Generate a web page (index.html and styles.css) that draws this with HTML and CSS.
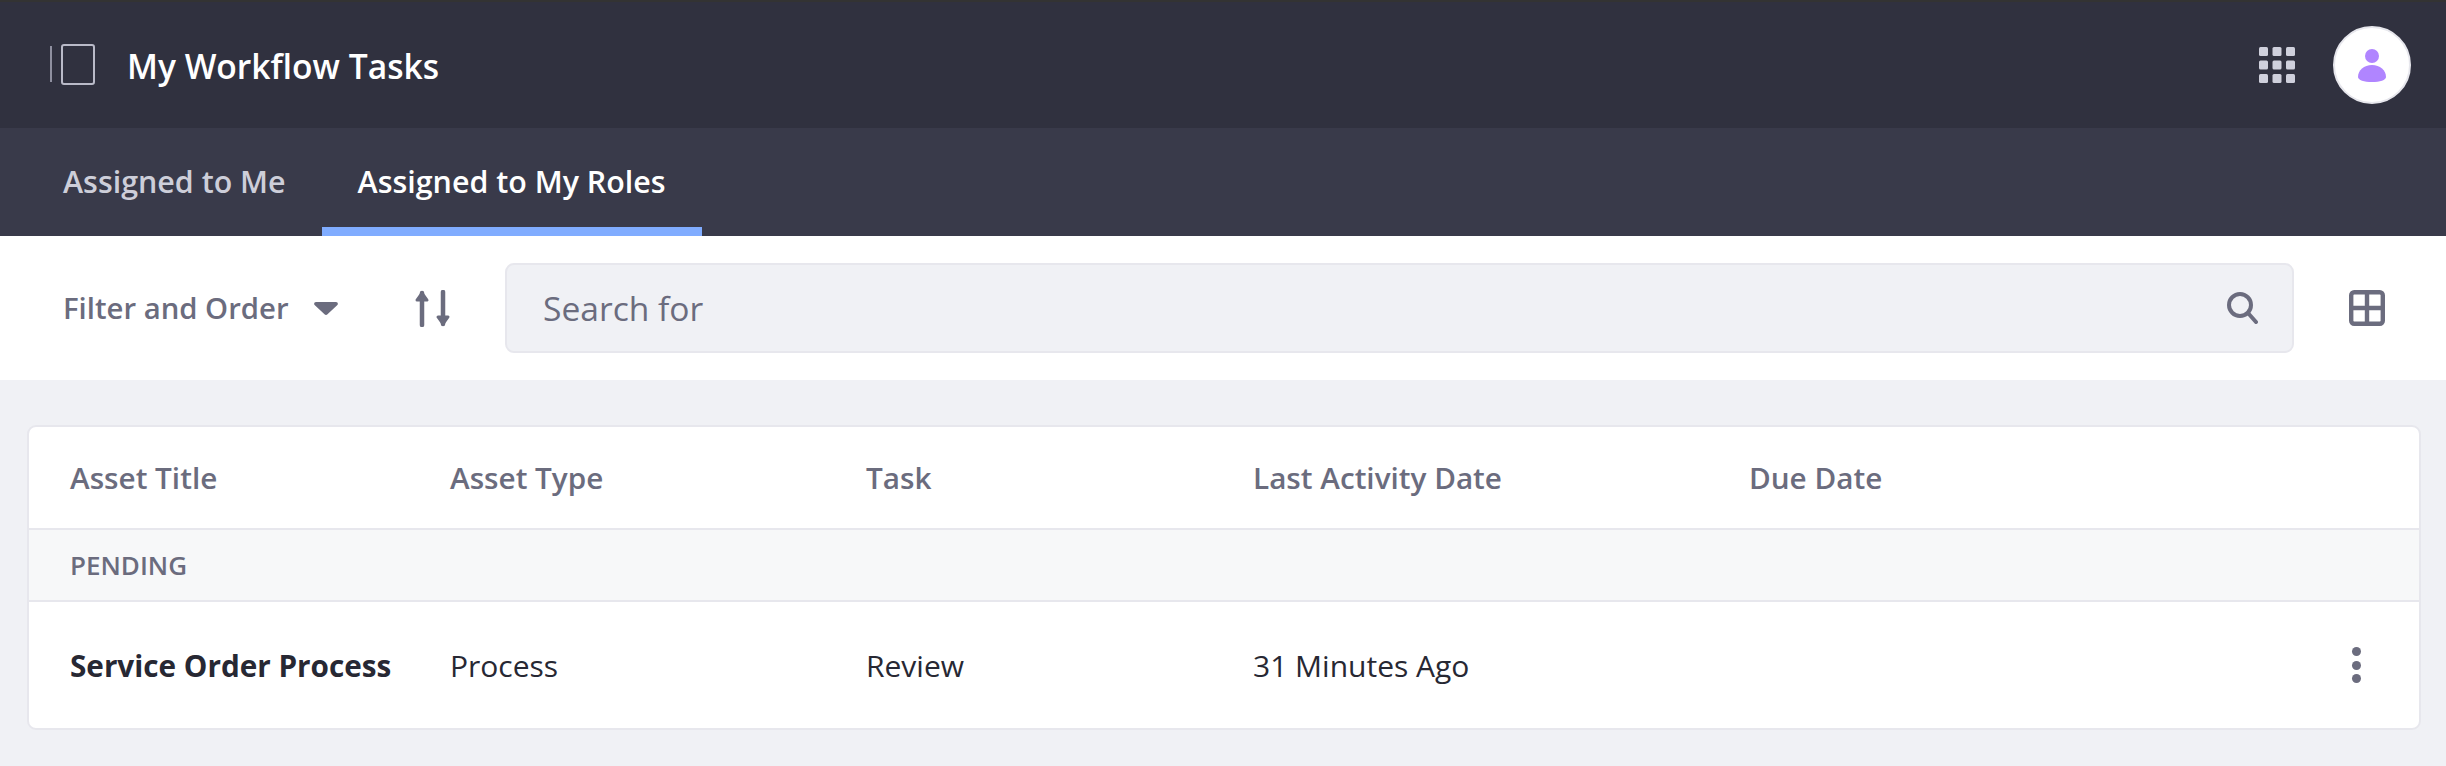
FILE: index.html
```html
<!DOCTYPE html>
<html lang="en">
<head>
    <meta charset="UTF-8">
    <meta name="viewport" content="width=device-width, initial-scale=1.0">
    <title>My Workflow Tasks</title>
    <link rel="stylesheet" href="styles.css">
</head>
<body>
    <header class="topbar">
        <svg class="sidebar-icon" width="46" height="42" viewBox="0 0 46 42">
            <path d="M1 2V38" stroke="#8f90a0" stroke-width="2" fill="none"/>
            <rect x="12" y="1" width="32" height="39" rx="2" stroke="#b9bac8" stroke-width="2" fill="none"/>
        </svg>
        <h1 class="page-title">My Workflow Tasks</h1>
        <svg class="apps-icon" width="36" height="36" viewBox="0 0 36 36" fill="#cfd0dc">
            <rect x="0" y="0" width="9" height="9" rx="1.5"/>
            <rect x="13.5" y="0" width="9" height="9" rx="1.5"/>
            <rect x="27" y="0" width="9" height="9" rx="1.5"/>
            <rect x="0" y="13.5" width="9" height="9" rx="1.5"/>
            <rect x="13.5" y="13.5" width="9" height="9" rx="1.5"/>
            <rect x="27" y="13.5" width="9" height="9" rx="1.5"/>
            <rect x="0" y="27" width="9" height="9" rx="1.5"/>
            <rect x="13.5" y="27" width="9" height="9" rx="1.5"/>
            <rect x="27" y="27" width="9" height="9" rx="1.5"/>
        </svg>
        <div class="avatar">
            <svg width="28" height="33" viewBox="0 0 28 33" fill="#b085ff">
                <circle cx="14" cy="7" r="7"/>
                <path d="M14 16C6 16 0 21 0 28C0 31 6 33 14 33C22 33 28 31 28 28C28 21 22 16 14 16Z"/>
            </svg>
        </div>
    </header>

    <nav class="tabs">
        <a class="tab">Assigned to Me</a>
        <a class="tab active">Assigned to My Roles</a>
    </nav>

    <div class="toolbar">
        <div class="filter">
            <span>Filter and Order</span>
            <svg width="24" height="13" viewBox="0 0 24 13" fill="#6b6c7e">
                <path d="M2 0H22C23.6 0 24.4 1.6 23.4 3L13.5 12.3C12.7 13.2 11.3 13.2 10.5 12.3L.6 3C-.4 1.6.4 0 2 0Z"/>
            </svg>
        </div>
        <svg class="sort-icon" width="37" height="37" viewBox="0 0 37 37" fill="#6b6c7e" stroke="#6b6c7e" stroke-linecap="round" stroke-linejoin="round">
            <path d="M8 35V3" stroke-width="4.5"/>
            <path d="M3 10L8 3L13 10Z" stroke-width="3"/>
            <path d="M29 2V34" stroke-width="4.5"/>
            <path d="M24 27L29 34L34 27Z" stroke-width="3"/>
        </svg>
        <div class="search">
            <span class="search-text">Search for</span>
            <svg width="31" height="32" viewBox="0 0 31 32" fill="none" stroke="#6b6c7e" stroke-width="4" stroke-linecap="round">
                <circle cx="13" cy="13" r="11"/>
                <path d="M21 21L29 30"/>
            </svg>
        </div>
        <svg class="table-icon" width="36" height="36" viewBox="0 0 36 36" fill="none" stroke="#6b6c7e" stroke-width="4.4">
            <rect x="2.2" y="2.2" width="31.6" height="31.6" rx="3"/>
            <path d="M18 2V34M2 18H34"/>
        </svg>
    </div>

    <main class="content">
        <div class="card">
            <div class="row head-row">
                <div>Asset Title</div>
                <div>Asset Type</div>
                <div>Task</div>
                <div>Last Activity Date</div>
                <div>Due Date</div>
            </div>
            <div class="group-row">PENDING</div>
            <div class="row task-row">
                <div class="task-title">Service Order Process</div>
                <div>Process</div>
                <div>Review</div>
                <div>31 Minutes Ago</div>
                <div></div>
                <div class="kebab"><span></span><span></span><span></span></div>
            </div>
        </div>
    </main>
</body>
</html>
```

FILE: styles.css
```css
* {
    box-sizing: border-box;
}

html, body {
    height: 100%;
}

body {
    margin: 0;
    background-color: #f0f1f5;
    font-family: "Open Sans", "Noto Sans", Arial, sans-serif;
    color: #272833;
    display: flex;
    flex-direction: column;
}

.topbar {
    height: 128px;
    background-color: #30313f;
    border-top: 2px solid #333;
    display: flex;
    align-items: center;
    padding-left: 50px;
    padding-right: 35px;
}

.sidebar-icon {
    margin-right: 31px;
}

.page-title {
    margin: 0;
    flex: 1;
    font-size: 33.6px;
    font-weight: 600;
    color: #fff;
    padding-top: 2px;
}

.apps-icon {
    margin-right: 38px;
}

.avatar {
    width: 78px;
    height: 78px;
    border-radius: 50%;
    background-color: #fff;
    border: 2px solid #e7e7ed;
    display: flex;
    align-items: center;
    justify-content: center;
}

.tabs {
    height: 108px;
    background-color: #393a4a;
    display: flex;
    padding-left: 27px;
}

.tab {
    padding: 8px 36px 0;
    display: flex;
    align-items: center;
    font-size: 30.4px;
    font-weight: 600;
    color: #cdced9;
    border-bottom: 9px solid transparent;
}

.tab.active {
    color: #fff;
    border-bottom-color: #80acff;
}

.toolbar {
    height: 144px;
    background-color: #fff;
    display: flex;
    align-items: center;
    padding-left: 63px;
    padding-right: 61px;
}

.filter {
    display: flex;
    align-items: center;
    gap: 25px;
    font-size: 29.3px;
    font-weight: 600;
    color: #6b6c7e;
    width: 351px;
}

.sort-icon {
    margin-right: 54px;
}

.search {
    flex: 1;
    height: 90px;
    background-color: #f0f1f5;
    border: 2px solid #e7e7ed;
    border-radius: 9px;
    display: flex;
    align-items: center;
    justify-content: space-between;
    padding-left: 36px;
    padding-right: 34px;
}

.search-text {
    font-size: 33.6px;
    color: #6b6c7e;
}

.table-icon {
    margin-left: 55px;
}

.content {
    flex: 1;
    padding: 45px 25px 0 27px;
}

.card {
    background-color: #fff;
    border: 2px solid #e7e7ed;
    border-radius: 9px;
    overflow: hidden;
}

.row {
    display: grid;
    grid-template-columns: 380px 416px 387px 496px 1fr 60px;
    align-items: center;
    padding-left: 41px;
    padding-right: 30px;
}

.head-row {
    height: 101px;
    font-size: 29.7px;
    font-weight: 600;
    color: #6b6c7e;
}

.group-row {
    height: 74px;
    background-color: #f7f8f9;
    border-top: 2px solid #e7e7ed;
    border-bottom: 2px solid #e7e7ed;
    padding-left: 41px;
    display: flex;
    align-items: center;
    font-size: 26px;
    font-weight: 600;
    color: #6b6c7e;
}

.task-row {
    height: 126px;
    font-size: 30px;
}

.task-title {
    font-weight: 700;
    font-size: 29.7px;
}

.kebab {
    display: flex;
    flex-direction: column;
    align-items: center;
    gap: 4.5px;
    width: 9px;
    margin-left: 23px;
}

.kebab span {
    width: 9px;
    height: 9px;
    border-radius: 50%;
    background-color: #6b6c7e;
}
```
